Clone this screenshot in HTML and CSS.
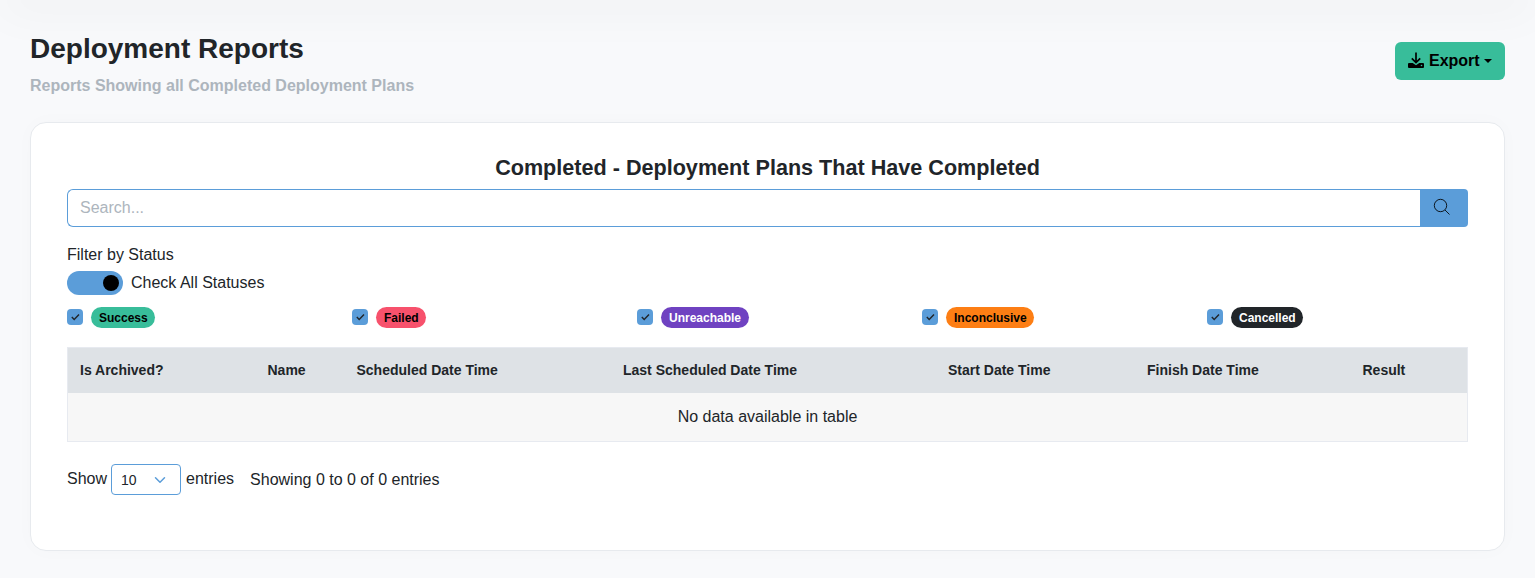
FILE: index.html
```html
<!DOCTYPE html>
<html lang="en">
<head>
<meta charset="utf-8">
<title>Deployment Reports</title>
<link rel="stylesheet" href="styles.css">
</head>
<body>
<div class="topbar"></div>
<main class="page">
  <header class="page-header">
    <div>
      <h1 class="page-title">Deployment Reports</h1>
      <p class="page-subtitle">Reports Showing all Completed Deployment Plans</p>
    </div>
    <button class="export" type="button">
      <svg class="export-icon" viewBox="0 0 16 16"><path d="M8 .5v9.500M3.800 6.300L8 10.500l4.200-4.200" fill="none" stroke="#000" stroke-width="1.700"/><path fill="#000" fill-rule="evenodd" d="M1 10.900h3.700L8 13.300l3.300-2.400H15q1 0 1 1V15q0 1-1 1H1q-1 0-1-1v-3.100q0-1 1-1zM13.500 12.700a.8.8 0 1 0 0 1.600a.8.8 0 1 0 0-1.600z"/></svg>
      <span>Export</span><span class="caret"></span>
    </button>
  </header>

  <section class="card">
    <h2 class="card-title">Completed - Deployment Plans That Have Completed</h2>
    <div class="search">
      <input class="search-input" type="text" placeholder="Search...">
      <button class="search-button" type="button" aria-label="Search">
        <svg width="18" height="18" viewBox="0 0 18 18" fill="none" stroke="#000" stroke-width=".85"><circle cx="7.500" cy="7.500" r="6.200"/><path d="M12 12l4.500 4.500"/></svg>
      </button>
    </div>
    <div class="filter-label">Filter by Status</div>
    <div class="switch-row"><span class="switch"></span><span>Check All Statuses</span></div>
    <div class="statuses">
      <div class="status"><span class="check"><svg viewBox="0 0 20 20"><path d="m6 10 3 3 6-6"/></svg></span><span class="badge success">Success</span></div>
      <div class="status"><span class="check"><svg viewBox="0 0 20 20"><path d="m6 10 3 3 6-6"/></svg></span><span class="badge failed">Failed</span></div>
      <div class="status"><span class="check"><svg viewBox="0 0 20 20"><path d="m6 10 3 3 6-6"/></svg></span><span class="badge unreachable">Unreachable</span></div>
      <div class="status"><span class="check"><svg viewBox="0 0 20 20"><path d="m6 10 3 3 6-6"/></svg></span><span class="badge inconclusive">Inconclusive</span></div>
      <div class="status"><span class="check"><svg viewBox="0 0 20 20"><path d="m6 10 3 3 6-6"/></svg></span><span class="badge cancelled">Cancelled</span></div>
    </div>
    <table class="table">
      <colgroup><col class="c-archived"><col class="c-name"><col class="c-scheduled"><col class="c-last"><col class="c-start"><col class="c-finish"><col></colgroup>
      <thead><tr><th>Is Archived?</th><th>Name</th><th>Scheduled Date Time</th><th>Last Scheduled Date Time</th><th>Start Date Time</th><th>Finish Date Time</th><th>Result</th></tr></thead>
      <tbody><tr><td colspan="7">No data available in table</td></tr></tbody>
    </table>
    <footer class="table-footer">
      <span>Show</span>
      <span class="select">10<svg width="12" height="12" viewBox="0 0 16 16"><path d="m2 5 6 6 6-6" fill="none" stroke="#5b9dd9" stroke-width="2" stroke-linecap="round" stroke-linejoin="round"/></svg></span>
      <span>entries</span>
      <span class="info">Showing 0 to 0 of 0 entries</span>
    </footer>
  </section>
</main>
</body>
</html>
```
FILE: styles.css
```css
* { box-sizing: border-box; }
body {
  margin: 0;
  height: 578px;
  overflow: hidden;
  background: #f8f9fb;
  color: #212529;
  font: 16px/24px "Liberation Sans", Arial, sans-serif;
}
.topbar {
  height: 20px;
  margin: -20px 0 0;
  box-shadow: 0 8px 48px rgba(0, 0, 0, .06);
}
.page { padding: 32px 30px 0; }
.page-header {
  display: flex;
  justify-content: space-between;
  height: 90px;
}
.page-title { margin: 0; font-size: 28px; line-height: 34px; }
.page-subtitle { margin: 8px 0 0; font-weight: 700; color: #adb5bd; }
.export {
  display: flex;
  align-items: center;
  width: 110px;
  height: 38px;
  margin-top: 10px;
  padding: 0 13px;
  border: 0;
  border-radius: 6px;
  background: #38bd9a;
  color: #000;
  font: 700 16px/24px "Liberation Sans", Arial, sans-serif;
}
.export-icon { flex: none; width: 16px; height: 16px; margin: 0 5px 2px 0; }
.caret {
  margin: 0 0 1px 4px;
  border: 4px solid transparent;
  border-top-color: #000;
  border-bottom: 0;
}
.card {
  height: 429px;
  padding: 32px 36px;
  border: 1px solid #e7eaee;
  border-radius: 16px;
  background: #fff;
  box-shadow: 0 0 20px rgba(0, 0, 0, .02);
}
.card-title { margin: 0; font-size: 21.6px; line-height: 26px; text-align: center; }
.search { display: flex; height: 38px; margin-top: 8px; }
.search-input {
  flex: 1;
  padding: 0 12px;
  border: 1px solid #5b9dd9;
  border-right: 0;
  border-radius: 6px 0 0 6px;
  font: inherit;
}
.search-input::placeholder { color: #adb5bd; }
.search-button {
  display: flex;
  align-items: center;
  width: 48px;
  padding: 0 0 2px 13px;
  border: 0;
  border-radius: 0 4px 4px 0;
  background: #5b9dd9;
}
.filter-label { margin-top: 16px; }
.switch-row { display: flex; gap: 8px; margin-top: 4px; }
.switch {
  display: flex;
  align-items: center;
  justify-content: flex-end;
  width: 56px;
  height: 24px;
  padding-right: 4px;
  border-radius: 12px;
  background: #5b9dd9;
}
.switch::after { content: ""; width: 16px; height: 16px; border-radius: 50%; background: #000; }
.statuses { display: flex; margin-top: 12px; height: 21px; }
.status { display: flex; align-items: flex-start; gap: 8px; width: 285px; }
.status:last-child { width: auto; }
.check { width: 16px; height: 16px; margin-top: 2px; border-radius: 4px; background: #5b9dd9; }
.check svg { display: block; width: 16px; height: 16px; fill: none; stroke: #212529; stroke-width: 1.8; }
.badge {
  height: 21px;
  padding: 1px 7.6px 0 8px;
  border-radius: 11px;
  color: #000;
  font-size: 12px;
  font-weight: 700;
  line-height: 20px;
}
.success { background: #38bd9a; }
.failed { background: #f7516c; }
.unreachable { background: #6f42c1; color: #fff; }
.inconclusive { background: #fd7e14; }
.cancelled { background: #212529; color: #fff; }
.table {
  width: 1401px;
  margin-top: 19px;
  border: 1px solid #e7eaf0;
  border-collapse: separate;
  border-spacing: 0;
  table-layout: fixed;
}
.table th {
  height: 45px;
  padding: 0 0 2px 12px;
  background: #dee2e6;
  font-size: 14px;
  text-align: left;
}
.table td { height: 48px; padding: 0; background: #f7f7f7; text-align: center; }
.c-archived { width: 187.5px; }
.c-name { width: 89px; }
.c-scheduled { width: 266.5px; }
.c-last { width: 325px; }
.c-start { width: 199px; }
.c-finish { width: 215.5px; }
.table-footer { display: flex; align-items: flex-start; margin-top: 22px; line-height: 30px; }
.select {
  display: flex;
  align-items: center;
  justify-content: space-between;
  width: 70px;
  height: 31px;
  margin: 0 5px 0 4px;
  padding: 0 14px 0 9px;
  border: 1px solid #5b9dd9;
  border-radius: 4px;
  font-size: 14px;
  line-height: 28px;
}
.info { margin: 1px 0 0 16px; }
```
